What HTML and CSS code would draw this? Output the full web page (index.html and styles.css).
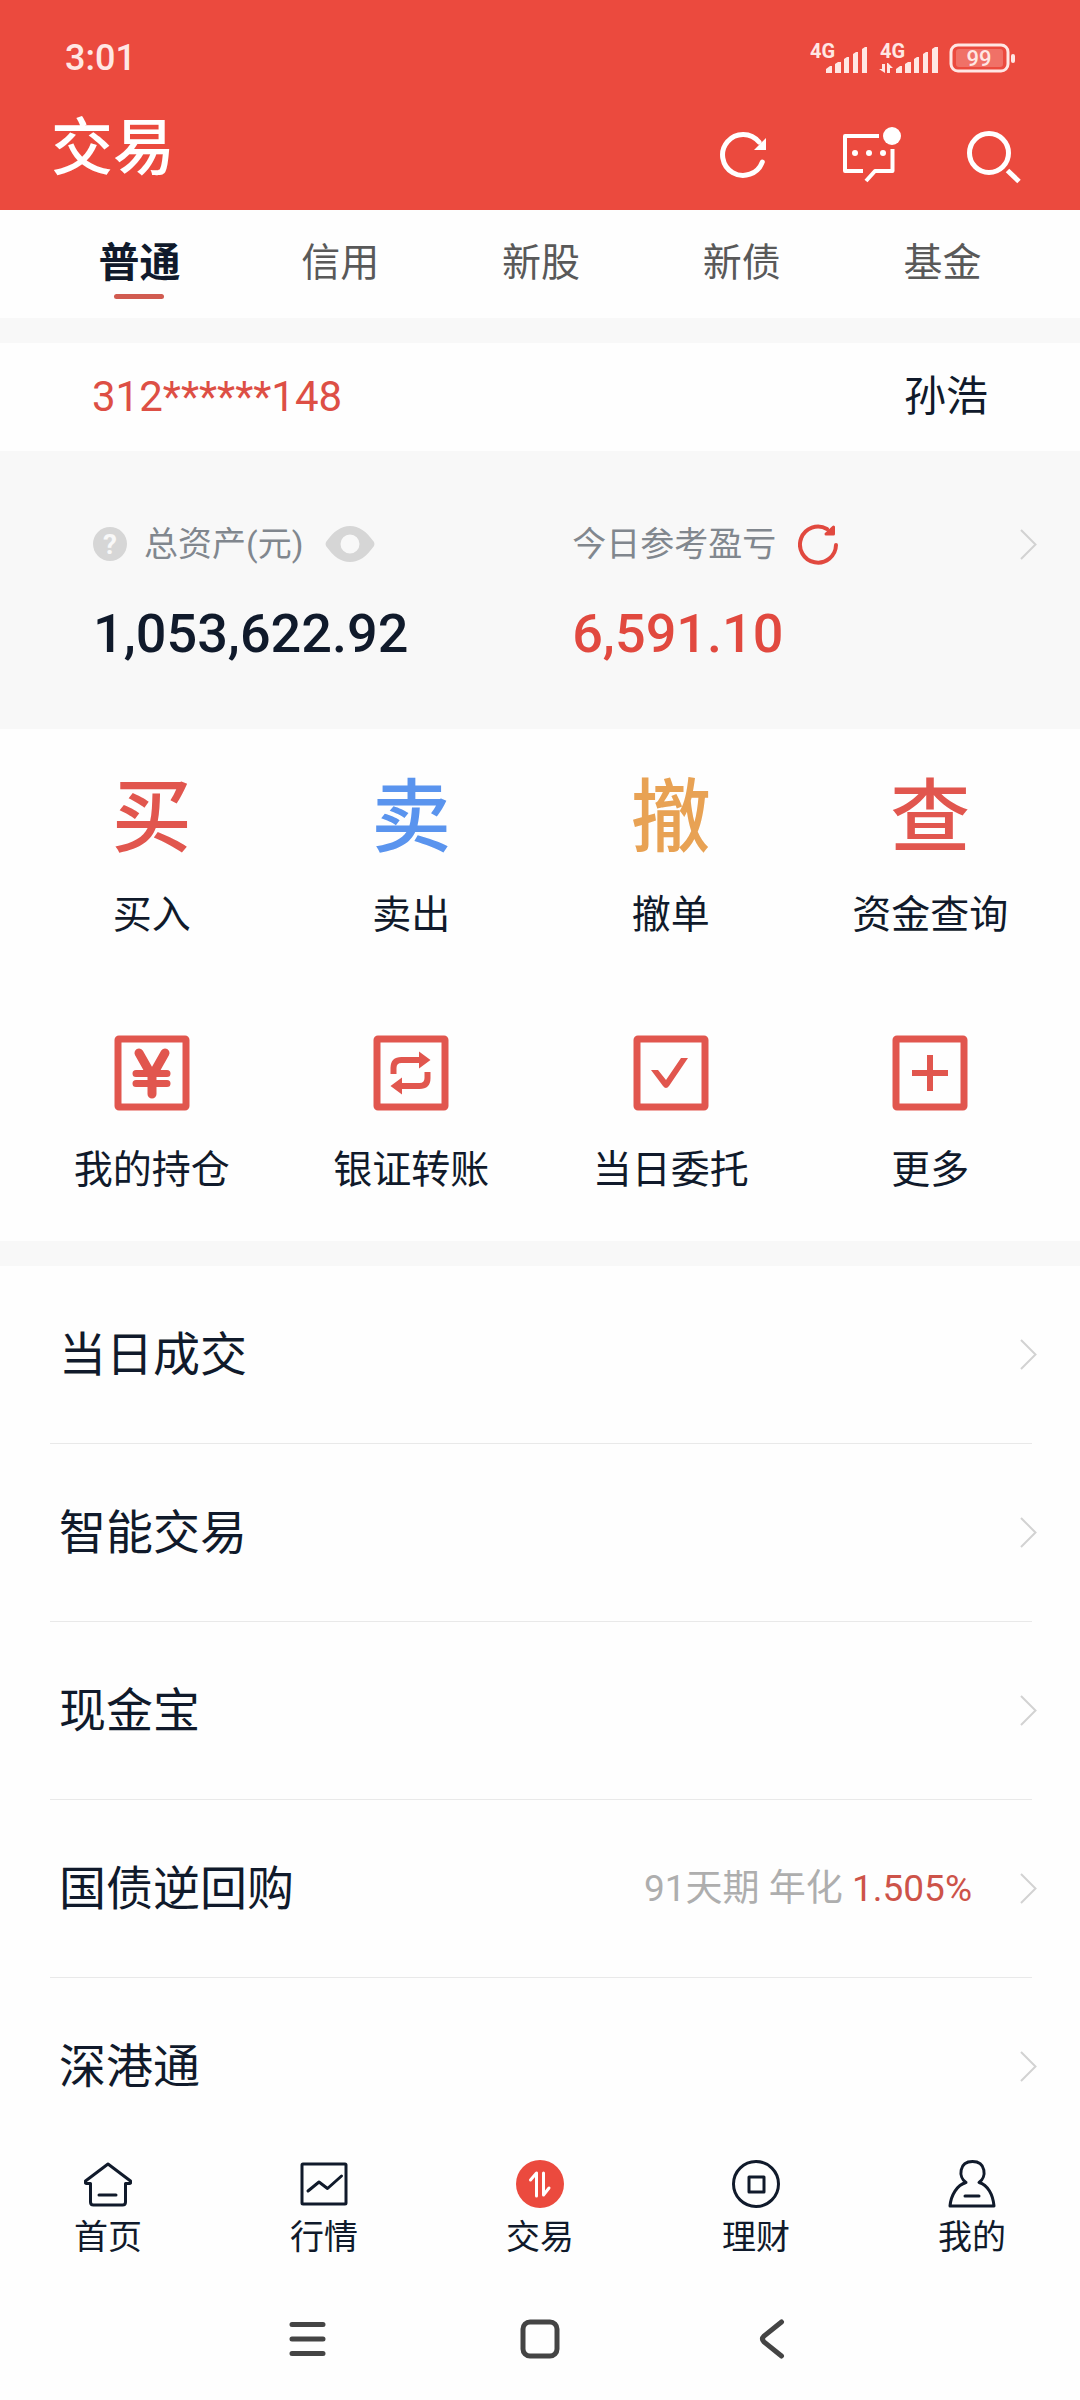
FILE: index.html
```html
<!DOCTYPE html>
<html lang="zh-CN">
<head>
    <meta charset="UTF-8">
    <meta name="viewport" content="width=device-width, initial-scale=1.0">
    <title>交易</title>
    <link rel="stylesheet" href="styles.css">
</head>
<body>
    <header class="header">
        <div class="status-bar">
            <span class="time">3:01</span>
            <div class="status-icons">
                <svg width="57" height="43" viewBox="0 -6 57 43" fill="currentColor">
                    <text class="net-label" x="0" y="15">4G</text>
                    <path d="M16 30v-4l4-3h2v7zM25 30v-9l3-2h3v11zM34 30V16l3-2h2v16zM43 30V11l3-2h2v21zM52 30V6l3-2h2v26z"/>
                </svg>
                <svg width="60" height="43" viewBox="0 -6 60 43" fill="currentColor">
                    <text class="net-label" x="2" y="15">4G</text>
                    <path d="M18 30v-4l4-3h2v7zM27 30v-9l3-2h3v11zM36 30V16l3-2h2v16zM45 30V11l3-2h2v21zM54 30V6l3-2h3v26z"/>
                    <path d="M4 21h3v9L1 26h3zM9 30h3v-5h3l-5-5H9z"/>
                </svg>
                <svg width="66" height="30" viewBox="0 0 66 30" fill="currentColor">
                    <rect x="2" y="2" width="57" height="26" rx="7" fill="none" stroke="currentColor" stroke-width="3"/>
                    <rect x="7" y="6" width="47" height="18" rx="3" opacity=".25"/>
                    <rect x="62" y="11" width="4" height="9" rx="2"/>
                    <text class="battery-label" x="30" y="23" text-anchor="middle">99</text>
                </svg>
            </div>
        </div>
        <div class="title-bar">
            <h1>交易</h1>
            <div class="actions">
                <button type="button" aria-label="刷新">
                    <svg width="60" height="60" viewBox="0 0 60 60" fill="none" stroke="currentColor" stroke-width="5">
                        <path stroke-linecap="round" d="M45.3 37A20.5 20.5 0 1 1 42 17"/>
                        <path fill="currentColor" stroke="none" d="M49 13v12H37z"/>
                    </svg>
                </button>
                <button type="button" aria-label="消息">
                    <svg width="60" height="60" viewBox="0 0 60 60" fill="none" stroke="currentColor" stroke-width="4">
                        <path stroke-linejoin="round" d="M37 11H3v35h18M50.5 24v22H33l-9 10"/>
                        <g fill="currentColor" stroke="none">
                            <circle cx="13" cy="28" r="3"/>
                            <circle cx="27" cy="28" r="3"/>
                            <circle cx="41" cy="28" r="3"/>
                            <circle cx="50" cy="11" r="9"/>
                        </g>
                    </svg>
                </button>
                <button type="button" aria-label="搜索">
                    <svg width="60" height="60" viewBox="0 0 60 60" fill="none" stroke="currentColor" stroke-width="5">
                        <circle cx="22" cy="28" r="19.5"/>
                        <path d="M40.5 45.5 52 56.5"/>
                    </svg>
                </button>
            </div>
        </div>
    </header>

    <nav class="tabs">
        <a class="active" href="#">普通</a>
        <a href="#">信用</a>
        <a href="#">新股</a>
        <a href="#">新债</a>
        <a href="#">基金</a>
    </nav>

    <main>
        <section class="account">
            <span class="account-no">312******148</span>
            <span class="account-name">孙浩</span>
        </section>

        <section class="assets">
            <div class="asset">
                <div class="asset-label">
                    <svg width="34" height="34" viewBox="0 0 34 34">
                        <circle cx="17" cy="17" r="17" fill="#d6d6d6"/>
                        <text class="help-mark" x="17" y="27" text-anchor="middle">?</text>
                    </svg>
                    <span>总资产(元)</span>
                    <button type="button" aria-label="隐藏金额">
                        <svg width="50" height="36" viewBox="0 0 50 36">
                            <path fill="#d6d6d6" fill-rule="evenodd" d="M1 16C9 5 16 0 25 0s16 5 24 16q1 2 0 4C41 31 34 36 25 36S9 31 1 20q-1-2 0-4zM25 8.5a9.5 9.5 0 1 0 0 19 9.5 9.5 0 0 0 0-19z"/>
                        </svg>
                    </button>
                </div>
                <div class="asset-value">1,053,622.92</div>
            </div>
            <div class="asset">
                <div class="asset-label">
                    <span>今日参考盈亏</span>
                    <button type="button" aria-label="刷新盈亏">
                        <svg width="41" height="41" viewBox="0 0 41 41" fill="none" stroke="#e1493f" stroke-width="4" stroke-linecap="round">
                            <path d="M38 21A18 18 0 1 1 29 5"/>
                            <path fill="#e1493f" stroke-width="3" stroke-linejoin="round" d="M35.5 3v7H28z"/>
                        </svg>
                    </button>
                </div>
                <div class="asset-value profit">6,591.10</div>
            </div>
            <a class="asset-more" href="#" aria-label="资产详情">
                <svg class="chevron" viewBox="0 0 17 31"><path d="M1 1l14.5 14.5L1 30"/></svg>
            </a>
        </section>

        <section class="shortcuts">
            <a href="#"><span class="glyph red" aria-hidden="true">买</span><span>买入</span></a>
            <a href="#"><span class="glyph blue" aria-hidden="true">卖</span><span>卖出</span></a>
            <a href="#"><span class="glyph orange" aria-hidden="true">撤</span><span>撤单</span></a>
            <a href="#"><span class="glyph red" aria-hidden="true">查</span><span>资金查询</span></a>
            <a href="#">
                <span class="glyph red">
                    <svg width="76" height="76" viewBox="0 0 76 76">
                        <rect x="4" y="4" width="68" height="68" rx="1"/>
                        <g stroke-linecap="round">
                            <path stroke-width="9" d="M25 18l13 23 13-23M38 41v18"/>
                            <path d="M22 38.5h31M22 48.5h31"/>
                        </g>
                    </svg>
                </span>
                <span>我的持仓</span>
            </a>
            <a href="#">
                <span class="glyph red">
                    <svg width="76" height="76" viewBox="0 0 76 76">
                        <rect x="4" y="4" width="68" height="68" rx="1"/>
                        <path stroke-width="6" d="M20.5 39v-6q0-8 8-8H47M54.5 37v6q0 8-8 8H28"/>
                        <path fill="currentColor" stroke="none" d="M46 16.5 57.5 25 46 33.5zM29 42.5 17.5 51 29 59.5z"/>
                    </svg>
                </span>
                <span>银证转账</span>
            </a>
            <a href="#">
                <span class="glyph red">
                    <svg width="76" height="76" viewBox="0 0 76 76">
                        <rect x="4" y="4" width="68" height="68" rx="1"/>
                        <path fill="currentColor" stroke="none" d="M18 35h7l8 10 15-22h7L36 51q-3 4-6 0z"/>
                    </svg>
                </span>
                <span>当日委托</span>
            </a>
            <a href="#">
                <span class="glyph red">
                    <svg width="76" height="76" viewBox="0 0 76 76">
                        <rect x="4" y="4" width="68" height="68" rx="1"/>
                        <path stroke-width="6" d="M38 20v36M20 38h36"/>
                    </svg>
                </span>
                <span>更多</span>
            </a>
        </section>

        <ul class="menu">
            <li><a href="#"><span class="menu-title">当日成交</span><svg class="chevron" viewBox="0 0 17 31"><path d="M1 1l14.5 14.5L1 30"/></svg></a></li>
            <li><a href="#"><span class="menu-title">智能交易</span><svg class="chevron" viewBox="0 0 17 31"><path d="M1 1l14.5 14.5L1 30"/></svg></a></li>
            <li><a href="#"><span class="menu-title">现金宝</span><svg class="chevron" viewBox="0 0 17 31"><path d="M1 1l14.5 14.5L1 30"/></svg></a></li>
            <li><a href="#"><span class="menu-title">国债逆回购</span><span class="menu-note">91天期 年化 <b>1.505%</b></span><svg class="chevron" viewBox="0 0 17 31"><path d="M1 1l14.5 14.5L1 30"/></svg></a></li>
            <li><a href="#"><span class="menu-title">深港通</span><svg class="chevron" viewBox="0 0 17 31"><path d="M1 1l14.5 14.5L1 30"/></svg></a></li>
        </ul>
    </main>

    <nav class="tab-bar">
        <a href="#">
            <svg viewBox="0 0 48 48">
                <path d="M24 4 1.5 21q-1 2 1 2.500h4V42q0 3 3 3h29q3 0 3-3V23.500h4q2-.5 1-2.500zM15 35h17"/>
            </svg>
            <span>首页</span>
        </a>
        <a href="#">
            <svg viewBox="0 0 48 48">
                <rect x="2" y="4" width="44" height="40" rx="1"/>
                <path d="M8 31l11-9 8.500 6.500L41.500 16"/>
            </svg>
            <span>行情</span>
        </a>
        <a href="#">
            <svg viewBox="0 0 48 48">
                <circle cx="24" cy="24" r="24" fill="#eb4a3e" stroke="none"/>
                <path stroke="#fff" d="M14.500 20l6-7v23M27.500 13v22l5.500-7"/>
            </svg>
            <span>交易</span>
        </a>
        <a href="#">
            <svg viewBox="0 0 48 48">
                <circle cx="24" cy="24" r="22.500"/>
                <rect x="17" y="17" width="15" height="15"/>
            </svg>
            <span>理财</span>
        </a>
        <a href="#">
            <svg viewBox="0 0 48 48">
                <path d="M18 22.500C10 17 11 1.500 24.500 1.500S39 17 31 22.500C40 25 45 35 46 46H2C3 35 9 25 18 22.500zM17 36h14"/>
            </svg>
            <span>我的</span>
        </a>
    </nav>

    <div class="system-nav">
        <button type="button" aria-label="最近任务">
            <svg width="40" height="40" viewBox="0 0 40 40"><path d="M4 5.500h31M4 20h31M4 34.500h31"/></svg>
        </button>
        <button type="button" aria-label="主屏幕">
            <svg width="40" height="40" viewBox="0 0 40 40"><rect x="3" y="3" width="34" height="34" rx="7"/></svg>
        </button>
        <button type="button" aria-label="返回">
            <svg width="40" height="40" viewBox="0 0 40 40"><path d="M29.500 3 12 17q-3 3 0 6l17.500 14"/></svg>
        </button>
    </div>
</body>
</html>
```
FILE: styles.css
```css
/* General Styles */
* {
    box-sizing: border-box;
}

body {
    font-family: Roboto, "Noto Sans CJK SC", sans-serif;
    margin: 0;
    min-height: 100vh;
    display: flex;
    flex-direction: column;
    background-color: #fefefe;
    color: #101a2b;
}

a {
    color: inherit;
    text-decoration: none;
}

button {
    padding: 0;
    border: none;
    background: none;
    color: inherit;
    cursor: pointer;
}

svg {
    display: block;
    flex-shrink: 0;
}

main {
    flex: 1;
}

.chevron {
    width: 17px;
    height: 31px;
    fill: none;
    stroke: #d2d2d2;
    stroke-width: 2;
}

/* Header */
.header {
    background-color: #eb4a3e;
    color: white;
    padding: 37px 53px 25px 51px;
}

.status-bar {
    display: flex;
    justify-content: space-between;
    align-items: center;
    height: 42px;
    padding: 0 12px 0 14px;
    color: #ffe7e4;
}

.time {
    font-size: 36px;
    font-weight: 500;
}

.status-icons {
    display: flex;
    align-items: center;
    gap: 11px;
}

.net-label {
    font-size: 20px;
    font-weight: 700;
}

.battery-label {
    font-size: 22px;
    font-weight: 500;
}

.title-bar {
    display: flex;
    justify-content: space-between;
    align-items: flex-end;
    margin-top: 30px;
}

.title-bar h1 {
    margin: 0;
    font-size: 62px;
    font-weight: 500;
    line-height: 72px;
}

.actions {
    display: flex;
    gap: 65px;
    padding-top: 16px;
}

/* Account type tabs */
.tabs {
    display: grid;
    grid-template-columns: repeat(5, 1fr);
    height: 108px;
    padding: 0 37px 0 39px;
    text-align: center;
    font-size: 39px;
    line-height: 106px;
    color: #595959;
}

.tabs a {
    position: relative;
}

.tabs .active {
    font-size: 41px;
    font-weight: 700;
    color: #101a2b;
}

.tabs .active::after {
    content: "";
    position: absolute;
    left: 50%;
    bottom: 19px;
    width: 50px;
    height: 5px;
    margin-left: -25px;
    border-radius: 3px;
    background-color: #d15b50;
}

/* Account */
.account {
    display: flex;
    justify-content: space-between;
    align-items: center;
    height: 133px;
    padding: 0 92px;
    border-top: 25px solid #f8f8f8;
    font-size: 42px;
    line-height: 56px;
}

.account-no {
    color: #dd4f45;
}

.assets {
    display: grid;
    grid-template-columns: 1.07fr 1fr auto;
    padding: 69px 43px 63px 93px;
    background-color: #f8f8f8;
}

.asset-label {
    display: flex;
    align-items: center;
    height: 48px;
    font-size: 34px;
    line-height: 40px;
    color: #81878e;
}

.asset-label svg + span {
    margin-left: 17px;
}

.asset-label button {
    margin-left: 22px;
}

.help-mark {
    font-size: 28px;
    font-weight: 700;
    fill: #f8f8f8;
}

.asset-value {
    margin-top: 34px;
    font-size: 54px;
    font-weight: 500;
    line-height: 64px;
}

.profit {
    color: #e1493f;
}

.asset-more {
    display: flex;
    align-items: center;
    height: 48px;
}

/* Shortcuts */
.shortcuts {
    display: grid;
    grid-template-columns: repeat(4, 1fr);
    row-gap: 90px;
    padding: 49px 20px 43px 22px;
    border-bottom: 25px solid #f8f8f8;
}

.shortcuts a {
    display: flex;
    flex-direction: column;
    align-items: center;
    gap: 29px;
    font-size: 39px;
    line-height: 56px;
}

.glyph {
    display: flex;
    align-items: center;
    height: 80px;
    font-size: 80px;
    font-weight: 500;
    line-height: 80px;
}

.glyph svg {
    fill: none;
    stroke: currentColor;
    stroke-width: 7;
}

.red {
    color: #e1564e;
}

.blue {
    color: #5a94ee;
}

.orange {
    color: #e8a254;
}

/* Menu list */
.menu {
    list-style: none;
    margin: 0;
    padding: 0 48px 0 50px;
}

.menu li {
    border-bottom: 1px solid #e9e9e9;
}

.menu li:last-child {
    border-bottom: none;
}

.menu a {
    display: flex;
    align-items: center;
    height: 177px;
    margin-right: -5px;
    padding-left: 9px;
    line-height: 56px;
}

.menu-title {
    flex: 1;
    font-size: 47px;
}

.menu-note {
    margin-right: 48px;
    font-size: 37px;
    color: #aeaeae;
}

.menu-note b {
    font-weight: 400;
    color: #cd5349;
}

/* Bottom tab bar */
.tab-bar {
    display: grid;
    grid-template-columns: repeat(5, 1fr);
    padding: 5px 0 20px;
}

.tab-bar a {
    display: flex;
    flex-direction: column;
    align-items: center;
    gap: 9px;
    font-size: 34px;
    line-height: 40px;
}

.tab-bar svg {
    width: 48px;
    height: 48px;
    fill: none;
    stroke: #101a2b;
    stroke-width: 3;
    stroke-linecap: round;
    stroke-linejoin: round;
}

/* System navigation */
.system-nav {
    display: flex;
    justify-content: center;
    align-items: center;
    gap: 192px;
    height: 123px;
}

.system-nav svg {
    fill: none;
    stroke: #444;
    stroke-width: 5;
    stroke-linecap: round;
}
```
